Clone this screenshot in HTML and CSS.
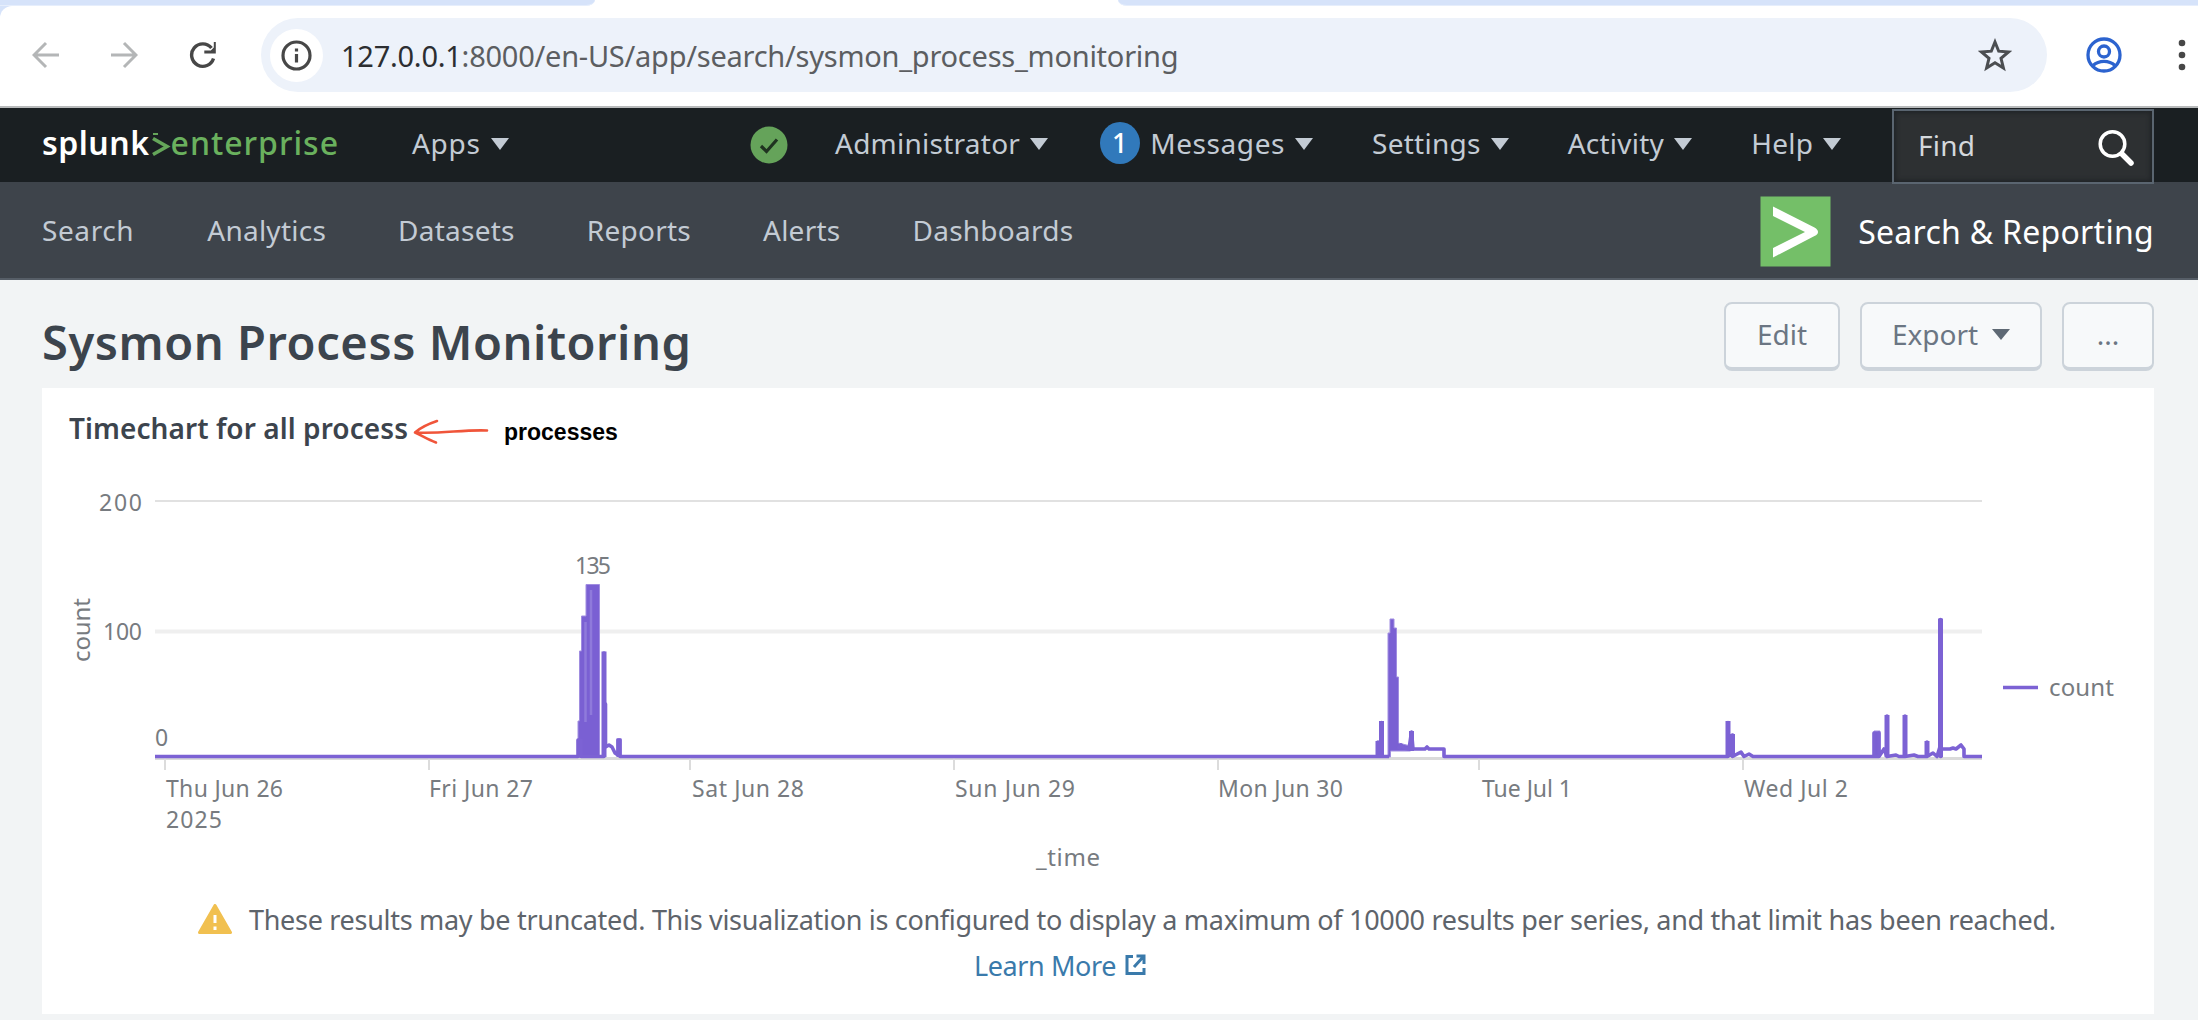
FILE: index.html
```html
<!DOCTYPE html>
<html lang="en">
<head>
<meta charset="utf-8">
<title>Sysmon Process Monitoring</title>
<link rel="stylesheet" href="styles.css">
</head>
<body>
<div class="browser">
  <div class="tabstrip"><div class="tab-left"></div><div class="tab-right"></div></div>
  <div class="toolbar">
    <svg class="tool back" width="28" height="28" viewBox="0 0 28 28"><path d="M27 14H3M14 2 2 14l12 12"/></svg>
    <svg class="tool forward" width="28" height="28" viewBox="0 0 28 28"><path d="M1 14h24M14 2l12 12-12 12"/></svg>
    <svg class="tool reload" width="28" height="28" viewBox="0 0 28 28"><path d="M24.5 17.5A11.2 11.2 0 1 1 22.5 7"/><path class="solid" d="M26.8 1v11.5H15.3V9.5h6.500l3-3V1z"/></svg>
    <div class="omnibox">
      <span class="site-info"><svg width="31" height="31" viewBox="0 0 31 31"><circle cx="15.500" cy="15.500" r="13.500"/><path d="M15.500 14v8.500M15.500 8.500v3"/></svg></span>
      <span class="url"><span class="host">127.0.0.1</span>:8000/en-US/app/search/sysmon_process_monitoring</span>
      <svg class="star" width="34" height="34" viewBox="0 0 34 34"><path d="m17 4 3.700 9.200 9.800.8-7.500 6.400 2.400 9.600-8.400-5.200-8.400 5.200 2.400-9.600-7.500-6.400 9.800-.8z"/></svg>
    </div>
    <svg class="profile" width="36" height="36" viewBox="0 0 36 36"><circle cx="18" cy="18" r="16"/><circle cx="18" cy="14.500" r="5.500"/><path d="M7 28.500c6-5.500 16-5.500 22 0"/></svg>
    <svg class="dots" width="8" height="34" viewBox="0 0 8 34"><circle cx="4" cy="5" r="3.300"/><circle cx="4" cy="17" r="3.300"/><circle cx="4" cy="29" r="3.300"/></svg>
  </div>
</div>

<div class="topbar">
  <div class="brand"><span class="brand-name">splunk</span><svg width="20" height="28" viewBox="0 0 20 28"><path d="M2 6.500 16 14.500 2 22.500"/><path class="fleck" d="M2 2h5"/></svg><span class="brand-edition">enterprise</span></div>
  <span class="menu apps">Apps<i class="caret"></i></span>
  <svg class="health" width="38" height="38" viewBox="0 0 38 38"><circle cx="19" cy="19" r="18.500"/><path d="m11 20 5.500 5.500L27 13.500"/></svg>
  <div class="menus">
    <span class="menu admin">Administrator<i class="caret"></i></span>
    <span class="menu messages"><b class="badge">1</b>Messages<i class="caret"></i></span>
    <span class="menu">Settings<i class="caret"></i></span>
    <span class="menu">Activity<i class="caret"></i></span>
    <span class="menu">Help<i class="caret"></i></span>
  </div>
  <div class="find"><span>Find</span><svg width="38" height="38" viewBox="0 0 38 38"><circle cx="15.500" cy="16" r="12.300"/><path class="handle" d="m25 26 9 9"/></svg></div>
</div>

<div class="appnav">
  <nav><a class="current">Search</a><a>Analytics</a><a>Datasets</a><a>Reports</a><a>Alerts</a><a>Dashboards</a></nav>
  <div class="app"><svg width="71" height="71" viewBox="0 0 71 71"><rect x=".5" y=".5" width="70" height="70"/><path d="M13 10.500 54.500 31.500Q58 33.500 58 36T54.500 40L13 61.500V52l32-16L13 20z"/></svg><span>Search &amp; Reporting</span></div>
</div>

<main>
  <header class="page-head">
    <h1>Sysmon Process Monitoring</h1>
    <div class="actions"><button>Edit</button><button class="export">Export<i class="caret"></i></button><button class="more">...</button></div>
  </header>
  <section class="panel">
    <div class="panel-head">
      <h2>Timechart for all process</h2>
      <svg class="arrow" width="76" height="26" viewBox="0 0 76 26"><path d="M2 13.500c26 1.500 48-3 72-2M24 2C15 5 7 9 2 13.500 8 16 14 20 23 23.500"/></svg>
      <span class="note">processes</span>
    </div>
    <svg class="chart" width="2112" height="448" viewBox="42 448 2112 448">
      <path class="grid" d="M155 501H1982"/>
      <path class="grid mid" d="M155 631.500H1982"/>
      <path class="axis" d="M155 758.500H1982"/>
      <path class="ticks" d="M165 758v12M429 758v12M690 758v12M954 758v12M1218 758v12M1479 758v12M1743 758v12"/>
      <path class="blocks" d="M578 757V721h1.500V651h2V616h4.500V584.500h13.500V757zM1388 757V633h2V619h4v9h2.500v49h2v66l12 3V751h-20v6zM1874 757V731h6v26z"/>
      <path class="gaps" d="M585.500 622V722M591 590V715"/>
      <path class="line" d="M155 756.500H578V740H581V756.500H604V653V756.500L605.500 704V747L609 745 612 747 615 753 618 755V740H620V756.500H1378V742V756.500H1381.500V722.500V756.500H1389M1398 749 1401 745 1404 748 1409 749 1411.500 732 1413 749H1425L1427 747 1429 749H1444V756.500H1728V722.500V756.500L1732.500 735V756.500L1741 752 1744 756.500 1749 754 1753 756.500H1874V733V756.500H1879V733V756.500L1884 749 1887 756.500V716V756.500L1896 755 1899 756.500H1905V716V756.500L1914 755 1918 756.500H1927V742V756.500L1933 753 1937 756.500 1940.500 745V619.500V756.500H1941V749H1950L1953 748 1956 749 1961 745 1964 749V756.500H1982"/>
      <path class="spikes" d="M604 757V651.500M619 757V738.500M1378 757V741M1381.500 757V721M1411.500 751V731M1728 757V721M1732.500 757V734M1887 757V715M1905 757V715M1927 757V741M1940.500 757V618.500"/>
      <path class="line" d="M2003 687.500h35"/>
      <g class="labels">
        <text x="99" y="511" textLength="43">200</text>
        <text x="103" y="640" textLength="39">100</text>
        <text x="575" y="574" textLength="36">135</text>
        <text x="155" y="746">0</text>
        <text x="166" y="797" textLength="117">Thu Jun 26</text>
        <text x="166" y="828" textLength="56">2025</text>
        <text x="429" y="797" textLength="104">Fri Jun 27</text>
        <text x="692" y="797" textLength="112">Sat Jun 28</text>
        <text x="955" y="797" textLength="120">Sun Jun 29</text>
        <text x="1218" y="797" textLength="125">Mon Jun 30</text>
        <text x="1482" y="797" textLength="90">Tue Jul 1</text>
        <text x="1744" y="797" textLength="104">Wed Jul 2</text>
      </g>
      <g class="titles">
        <text transform="translate(90 662) rotate(-90)" textLength="64">count</text>
        <text x="1036" y="866" textLength="64">_time</text>
        <text x="2049" y="696" textLength="65">count</text>
      </g>
    </svg>
    <div class="notice">
      <svg width="34" height="30" viewBox="0 0 34 30"><path class="tri" d="M17 1.500 32.500 28.500h-31z"/><path class="mark" d="M17 11v8M17 22.500v3.500"/></svg>
      <span>These results may be truncated. This visualization is configured to display a maximum of 10000 results per series, and that limit has been reached.</span>
    </div>
    <a class="learn">Learn More<svg width="21" height="22" viewBox="0 0 21 22"><path d="M8 2.500H2v17h17V14M11.500 2H19v8M19 2 9 13"/></svg></a>
  </section>
</main>
</body>
</html>
```
FILE: styles.css
```css
* { box-sizing: border-box; }
body { margin: 0; background: #f2f4f5; font-family: "Noto Sans", sans-serif; font-size: 28px; overflow: hidden; }
svg { display: block; flex: none; fill: none; }
h1, h2 { margin: 0; font-weight: 600; color: #3c444d; }
.caret { width: 0; height: 0; border: 9px solid transparent; border-top: 12px solid #c3cbd4; border-bottom: 0; }

/* browser chrome */
.browser { height: 108px; background: #d6e3fa; border-bottom: 2px solid #b8babb; overflow: hidden; }
.tabstrip { display: flex; justify-content: space-between; height: 6px; background: #fff; }
.tab-left { width: 595px; background: #d6e3fa; border-bottom: 1px solid #e6eefc; border-bottom-right-radius: 9px 6px; }
.tab-right { width: 1080px; background: #d6e3fa; border-bottom: 1px solid #e6eefc; border-bottom-left-radius: 9px 6px; }
.toolbar { display: flex; align-items: center; height: 100px; padding: 0 12px 2px 32px; background: #fff; border-top-left-radius: 12px; }
.tool { stroke: #b4b6b7; stroke-width: 3; }
.forward { margin-left: 50px; }
.reload { margin-left: 51px; stroke: #474747; stroke-width: 3.4; }
.reload .solid { fill: #474747; stroke: none; }
.omnibox { display: flex; align-items: center; width: 1786px; height: 74px; margin-left: 44px; padding: 0 35px 0 9px; border-radius: 37px; background: #edf2fa; }
.site-info { display: grid; place-items: center; width: 53px; height: 53px; border-radius: 50%; background: #fff; }
.site-info svg { stroke: #474747; stroke-width: 3.2; }
.url { flex: 1; margin-left: 18px; font-size: 29px; letter-spacing: -.25px; color: #5c5e61; }
.host { color: #2c2e31; }
.star { stroke: #4b4e51; stroke-width: 3; }
.profile { margin-left: 39px; stroke: #2c63cf; stroke-width: 3.3; }
.dots { margin-left: auto; fill: #474747; }

/* product bar */
.topbar { display: flex; align-items: center; height: 74px; padding: 0 44px 5px 42px; background: #1a1f22; color: #c3cbd4; letter-spacing: .25px; }
.brand { display: flex; align-items: center; width: 370px; font-size: 32px; line-height: 40px; }
.brand-name { font-weight: 600; color: #fff; letter-spacing: .5px; }
.brand svg { margin: 6px 0 0 1px; stroke: #65a65a; stroke-width: 3.6; }
.brand svg .fleck { stroke-width: 2; }
.brand-edition { color: #6ab15e; font-weight: 500; letter-spacing: 1px; }
.menu { display: flex; align-items: center; gap: 10px; line-height: 40px; }
.menu .caret { margin-top: 2px; }
.apps { width: 338px; letter-spacing: .7px; }
.health { margin-top: 5px; fill: #65a35a; }
.health path { fill: none; stroke: #1f3320; stroke-width: 3.2; }
.menus { display: flex; gap: 59px; margin-left: 47px; }
.badge { display: grid; place-items: center; width: 40px; height: 42px; border-radius: 50%; background: #3179bb; color: #fff; font-size: 27px; font-weight: 500; line-height: 40px; }
.messages { margin-left: -7px; letter-spacing: .6px; }
.find { display: flex; align-items: center; justify-content: space-between; width: 262px; height: 75px; margin: 7px 0 0 auto; padding: 0 17px 2px 24px; border: 2px solid #5a6570; background: #2d3032; box-shadow: inset 0 0 4px 2px #202427; color: #d4d8dc; }
.topbar .find { z-index: 1; }
.find svg { margin-top: 4px; stroke: #fff; stroke-width: 3.5; }
.find .handle { stroke-width: 5.5; stroke-linecap: round; }

/* app navigation */
.appnav { display: flex; align-items: center; justify-content: space-between; height: 98px; padding: 2px 44px 0 42px; border-bottom: 2px solid #565e67; background: #3e444b; color: #c3cbd4; }
nav { display: flex; gap: 72px; padding-bottom: 2px; letter-spacing: .25px; }
.current { margin-right: 1px; letter-spacing: .6px; }
.app { display: flex; align-items: center; gap: 27px; color: #fff; font-size: 32px; letter-spacing: .28px; }
.app svg { fill: #74bf68; }
.app path { fill: #fff; }

/* dashboard */
main { padding: 0 44px 0 42px; }
.page-head { display: flex; justify-content: space-between; height: 108px; padding-top: 22px; }
h1 { margin-top: 10px; font-size: 47px; line-height: 60px; letter-spacing: .57px; }
.actions { display: flex; gap: 20px; }
button { display: flex; align-items: center; justify-content: center; width: 116px; height: 69px; padding: 0 0 3px; border: 2px solid #ccd3da; border-bottom-width: 4px; border-radius: 8px; background: #f7f9fa; color: #6b7683; font: 28px "Noto Sans", sans-serif; }
.export { width: 182px; gap: 14px; }
.export .caret { border-top-color: #5e6974; border-top-width: 11px; }
.more { width: 92px; }
.panel { height: 626px; padding-top: 20px; background: #fff; }
.panel-head { display: flex; align-items: center; height: 40px; padding-left: 27px; }
h2 { font-size: 28px; line-height: 40px; letter-spacing: .07px; }
.arrow { margin: 7px 0 0 5px; stroke: #f0553a; stroke-width: 2.6; stroke-linecap: round; stroke-linejoin: round; }
.note { margin: 8px 0 0 15px; color: #000; font: bold 23px "Liberation Sans", sans-serif; }
.grid { stroke: #e1e1e1; stroke-width: 2; }
.grid.mid { stroke: #efefef; stroke-width: 4; }
.axis { stroke: #dadada; stroke-width: 3; }
.ticks { stroke: #dcdcdc; stroke-width: 2; }
.line { stroke: #7c62d4; stroke-width: 3.6; stroke-linejoin: round; }
.spikes { stroke: #7c62d4; stroke-width: 5; }
.blocks { fill: #7a60d3; stroke: #a08de0; stroke-width: 1; }
.gaps { stroke: #8f7adb; stroke-width: 2.5; }
.labels { fill: #777b80; font-size: 23px; }
.titles { fill: #777b80; font-size: 24px; }
.notice { display: flex; align-items: center; gap: 17px; height: 46px; padding-left: 156px; color: #5e646b; font-size: 27px; letter-spacing: -.3px; white-space: nowrap; }
.tri { fill: #f1c050; stroke: #f1c050; stroke-width: 3; stroke-linejoin: round; }
.mark { stroke: #fff; stroke-width: 3; }
.learn { display: flex; align-items: center; gap: 9px; height: 46px; padding-left: 932px; color: #3a7aab; font-size: 27px; letter-spacing: -.4px; }
.learn svg { stroke: #3a7aab; stroke-width: 3; }
```
